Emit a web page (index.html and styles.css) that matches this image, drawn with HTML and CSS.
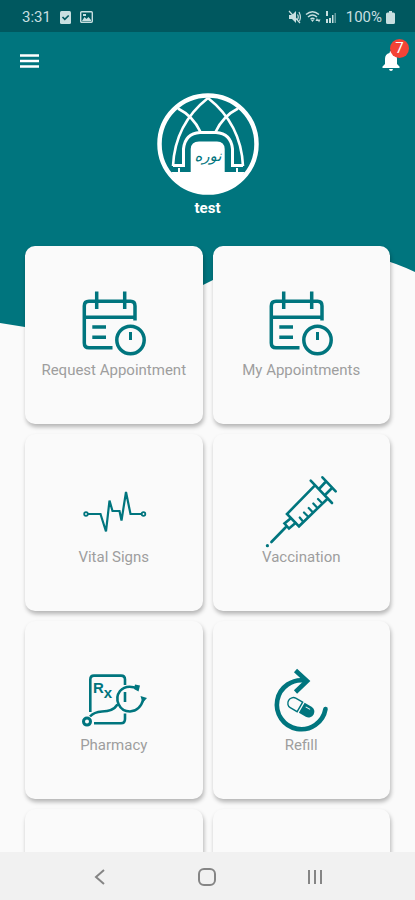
FILE: index.html
```html
<!DOCTYPE html>
<html lang="en">
<head>
    <meta charset="UTF-8">
    <meta name="viewport" content="width=device-width, initial-scale=1.0">
    <title>Patient Home</title>
    <link rel="stylesheet" href="styles.css">
</head>
<body>
    <!-- Shared icons -->
    <svg class="defs" aria-hidden="true">
        <symbol id="calendar" viewBox="0 0 64 64" overflow="visible">
            <g fill="none" stroke="currentColor" stroke-width="3.500">
                <path d="M53 30.500V16Q53 11.300 48.500 11.300H7Q2.300 11.300 2.300 16V53Q2.300 57.800 7 57.800H30.500"/>
                <path d="M2.300 27.300H53M14.700 1.500V19M42.700 1.500V19M10.300 37H24M10.300 47.300H24"/>
                <circle cx="48.500" cy="50" r="13.700"/>
                <path d="M48.500 42V50" stroke-width="3"/>
            </g>
        </symbol>
    </svg>

    <div class="status-bar">
        <div class="status-left">
            <span>3:31</span>
            <svg width="11" height="13" viewBox="0 0 11 13"><rect width="11" height="13" rx="1.500" fill="currentColor"/><path d="M2.500 6l2.300 2.300L8.700 4.500" fill="none" stroke="#00585f" stroke-width="1.700"/></svg>
            <svg width="13" height="12" viewBox="0 0 13 12"><rect x=".7" y=".7" width="11.600" height="10.600" rx="1" fill="none" stroke="currentColor" stroke-width="1.400"/><path d="M2 10l2.500-4 2 2 2-2L11 9v1zM3 3h3v2H3z" fill="currentColor"/></svg>
        </div>
        <div class="status-right">
            <svg width="13" height="14" viewBox="0 0 13 14"><path d="M1 5h3l4-4v12L4 9H1z" fill="currentColor"/><path d="M1 1l11 12M9.500 4.500Q11 7 9.500 9.500M11 2Q13.500 7 11.500 11" fill="none" stroke="currentColor" stroke-width="1.200"/></svg>
            <svg width="16" height="14" viewBox="0 0 16 14"><g fill="none" stroke="currentColor" stroke-width="1.500"><path d="M1 4.500Q7.500-1 14 4.500M3 7Q7.500 3 12 7M5.500 9.200Q7.500 7.500 9.500 9.200"/></g><path d="M6 10h3l-1.500 2zM10.500 11l1.500-3 1.500 3zM12.500 9.500h3l-1.500 3z" fill="currentColor"/></svg>
            <svg class="signal" width="12" height="14" viewBox="0 0 12 14"><path d="M1 1h2v5H1zM1 9h2v4H1zM4 8h2v5H4zM7 5h1.500v8H7z" fill="currentColor"/><path d="M9.500 3h1.500v10H9.500z" fill="currentColor" opacity=".5"/></svg>
            <span>100%</span>
            <svg width="9" height="13" viewBox="0 0 9 13"><path d="M3 0h3v1.500h1.500Q9 1.500 9 3v8.500Q9 13 7.500 13h-6Q0 13 0 11.500V3Q0 1.500 1.500 1.500H3z" fill="currentColor"/></svg>
        </div>
    </div>

    <main class="screen">
        <svg class="wave" viewBox="0 0 415 300" preserveAspectRatio="none" aria-hidden="true">
            <path d="M0 0H415V240Q377 222 345 222Q280 222 213 248L203 253Q110 304 25 295L0 291Z" fill="#00757e"/>
        </svg>

        <header class="toolbar">
            <button class="icon-button" aria-label="Menu">
                <svg width="19" height="14" viewBox="0 0 19 14"><path d="M0 1.500h19M0 7h19M0 12.500h19" stroke="currentColor" stroke-width="2.400"/></svg>
            </button>
            <button class="icon-button" aria-label="Notifications">
                <svg width="18" height="20" viewBox="0 0 18 20"><path d="M9 0Q10.500 0 10.500 2Q15 3.200 15 8V13L17.500 15.500V17H.5V15.500L3 13V8Q3 3.200 7.500 2Q7.500 0 9 0zM7 18h4Q10.700 20 9 20Q7.300 20 7 18z" fill="currentColor"/></svg>
                <span class="badge">7</span>
            </button>
        </header>

        <section class="profile">
            <svg class="logo" viewBox="0 0 102 102" role="img" aria-label="Logo">
                <path d="M14 79H21V75H23V79H33.700V56Q34 48.400 42 48.400H60Q67.500 48.400 67.700 56V79H79V75H81V79H88Q75 99 51 99Q27 99 14 79Z" fill="currentColor"/>
                <g fill="none" stroke="currentColor">
                    <circle cx="51" cy="51" r="48.500" stroke-width="4.500"/>
                    <path d="M51 5Q18 31 16 73M51 5Q84 31 86 73M21 15.500Q36 23 43.500 39M81 15.500Q66 23 58.500 39" stroke-width="2.600"/>
                    <path d="M16 72.500H26.500V56Q28 40.500 43 39.500H59Q74 40.500 75.500 56V72.500H86" stroke-width="3"/>
                </g>
                <text x="51" y="68" class="logo-text">نوره</text>
            </svg>
            <h1>test</h1>
        </section>

        <nav class="menu">
            <a class="card" href="#request">
                <svg class="card-icon"><use href="#calendar"/></svg>
                <span>Request Appointment</span>
            </a>
            <a class="card" href="#appointments">
                <svg class="card-icon"><use href="#calendar"/></svg>
                <span>My Appointments</span>
            </a>
            <a class="card" href="#vitals">
                <svg class="card-icon" viewBox="0 0 64 64">
                    <g fill="none" stroke="currentColor" stroke-width="1.800">
                        <circle cx="4" cy="37" r="1.800"/>
                        <circle cx="61.500" cy="37" r="1.800"/>
                        <path d="M6 37H18.500L24 54.500L27.500 23.500L30.500 34H37.500L39.500 43.500L44 15L48.500 37H59.500" stroke-width="2.200"/>
                    </g>
                </svg>
                <span>Vital Signs</span>
            </a>
            <a class="card" href="#vaccination">
                <svg class="card-icon" viewBox="0 0 64 64">
                    <g fill="none" stroke="currentColor" stroke-width="2.600" stroke-linecap="round">
                        <path d="M53.400 .3L66.700 14.300M41.700 3.700L63 26M56.500 5L50 12M62.500 11.500L56 18"/>
                        <path d="M45 9.300L18 37L30 49.300L58.500 21.700"/>
                        <path d="M30.700 40.500L34 44.500M35 35.500L39 39.500M39.700 31L43.500 35M44.300 26.500L48 30.500M49 22L52.500 25.500" stroke-width="2.200"/>
                        <path d="M21.500 41.500L15.500 46.500L20 51.500L26.500 46M16.500 50.500L2.400 65"/>
                    </g>
                    <circle cx="-1.600" cy="68.700" r="1.600" fill="currentColor"/>
                </svg>
                <span>Vaccination</span>
            </a>
            <a class="card" href="#pharmacy">
                <svg class="card-icon" viewBox="0 0 64 64">
                    <g fill="none" stroke="currentColor" stroke-width="2.600">
                        <path d="M8.300 47V14.500Q8.300 10.600 12 10.600H39Q43 10.600 43 14.500V20M43 27V37M43 48.500V54Q43 58.300 39 58.300H12"/>
                        <circle cx="5" cy="56.600" r="3.500" stroke-width="3"/>
                        <path d="M8 51.500Q12 47 20 46.500Q31 46.500 35.500 39.500M56 23.500Q44 19 38 26C32 34 37 46.500 48 46.500Q58 46 61.500 34"/>
                    </g>
                    <path d="M53 19.500L58 20.500L56.500 26.500L52 24zM58.500 31L65 33L60.500 38z" fill="currentColor"/>
                    <text x="11" y="28" class="rx">R<tspan dy="5">x</tspan></text>
                </svg>
                <span>Pharmacy</span>
            </a>
            <a class="card" href="#refill">
                <svg class="card-icon" viewBox="0 0 64 64">
                    <g fill="none" stroke="currentColor" stroke-width="4.600">
                        <path d="M56.500 44A24.500 24.500 0 1 1 37 15.700" stroke-linecap="round"/>
                        <path d="M26.500 5.500L38 16L26.500 27"/>
                    </g>
                    <g transform="rotate(30 32 42)">
                        <path d="M31 37H23A5 5.500 0 0 0 23 48H31Z" fill="none" stroke="currentColor" stroke-width="1.400"/>
                        <path d="M33 36.500H41A5.500 5.500 0 0 1 41 48H33Z" fill="currentColor"/>
                        <path d="M36 39.500H41" stroke="#fafafa" stroke-width="1"/>
                    </g>
                </svg>
                <span>Refill</span>
            </a>
            <div class="card"></div>
            <div class="card"></div>
        </nav>
    </main>

    <footer class="nav-bar">
        <button aria-label="Back"><svg width="24" height="24" viewBox="0 0 24 24"><path d="M16 5L8 12L16 19"/></svg></button>
        <button aria-label="Home"><svg width="24" height="24" viewBox="0 0 24 24"><rect x="3" y="4" width="16" height="16" rx="5"/></svg></button>
        <button aria-label="Recent apps"><svg width="24" height="24" viewBox="0 0 24 24"><path d="M5 5V19M11 5V19M17 5V19"/></svg></button>
    </footer>
</body>
</html>
```
FILE: styles.css
```css
/* General */
* {
    box-sizing: border-box;
}

body {
    margin: 0;
    height: 100vh;
    display: flex;
    flex-direction: column;
    overflow: hidden;
    font-family: Roboto, "Liberation Sans", sans-serif;
    background: #fafafa;
}

button {
    padding: 0;
    border: none;
    background: none;
    color: inherit;
    font: inherit;
    cursor: pointer;
}

svg {
    display: block;
}

.defs {
    position: absolute;
    width: 0;
    height: 0;
}

/* Status bar */
.status-bar {
    display: flex;
    flex: none;
    align-items: center;
    justify-content: space-between;
    height: 32px;
    padding: 2px 20px 0 22px;
    background: #00585f;
    color: #c8dfe0;
    font-size: 15px;
}

.status-left, .status-right {
    display: flex;
    align-items: center;
}

.status-left {
    gap: 9px;
}

.status-right {
    gap: 4px;
}

.signal {
    margin-right: 5px;
}

/* Header */
.screen {
    position: relative;
    flex: 1;
    min-height: 0;
    overflow: hidden;
}

.wave {
    position: absolute;
    top: 0;
    left: 0;
    width: 100%;
    height: 300px;
    z-index: -1;
}

.toolbar {
    display: flex;
    justify-content: space-between;
    height: 58px;
    padding: 0 15px 0 20px;
    color: #fff;
}

.icon-button {
    position: relative;
    display: flex;
    align-items: center;
}

.badge {
    position: absolute;
    top: 7px;
    right: -9px;
    width: 19px;
    height: 19px;
    border-radius: 50%;
    background: #f44336;
    font-size: 15px;
    line-height: 19px;
    text-align: center;
}

.profile {
    display: flex;
    flex-direction: column;
    align-items: center;
    padding-top: 3px;
    color: #fff;
}

.logo {
    width: 102px;
    height: 102px;
}

.logo-text {
    fill: #00757e;
    font: italic 15px "DejaVu Sans", sans-serif;
    text-anchor: middle;
}

.profile h1 {
    margin: 3px 0 0;
    font-size: 15px;
    line-height: 20px;
    font-weight: 700;
}

/* Menu cards */
.menu {
    display: grid;
    grid-template-columns: 1fr 1fr;
    gap: 10px;
    padding: 28px 25px;
}

.card {
    display: flex;
    flex-direction: column;
    align-items: center;
    justify-content: center;
    gap: 6px;
    aspect-ratio: 1;
    border-radius: 10px;
    background: #fafafa;
    box-shadow: 1px 3px 4px rgba(0, 0, 0, 0.28);
    color: #9e9e9e;
    font-size: 15px;
    line-height: 20px;
    text-decoration: none;
}

.card-icon {
    width: 64px;
    height: 64px;
    overflow: visible;
    color: #00757e;
}

.rx {
    fill: currentColor;
    font: bold 15px "Liberation Sans", sans-serif;
}

/* System navigation */
.nav-bar {
    display: flex;
    flex: none;
    align-items: center;
    justify-content: center;
    gap: 24px;
    height: 48px;
    padding-top: 2px;
    background: #f1f1f1;
}

.nav-bar button {
    width: 84px;
    display: flex;
    justify-content: center;
}

.nav-bar svg {
    fill: none;
    stroke: #858585;
    stroke-width: 2;
}
```
